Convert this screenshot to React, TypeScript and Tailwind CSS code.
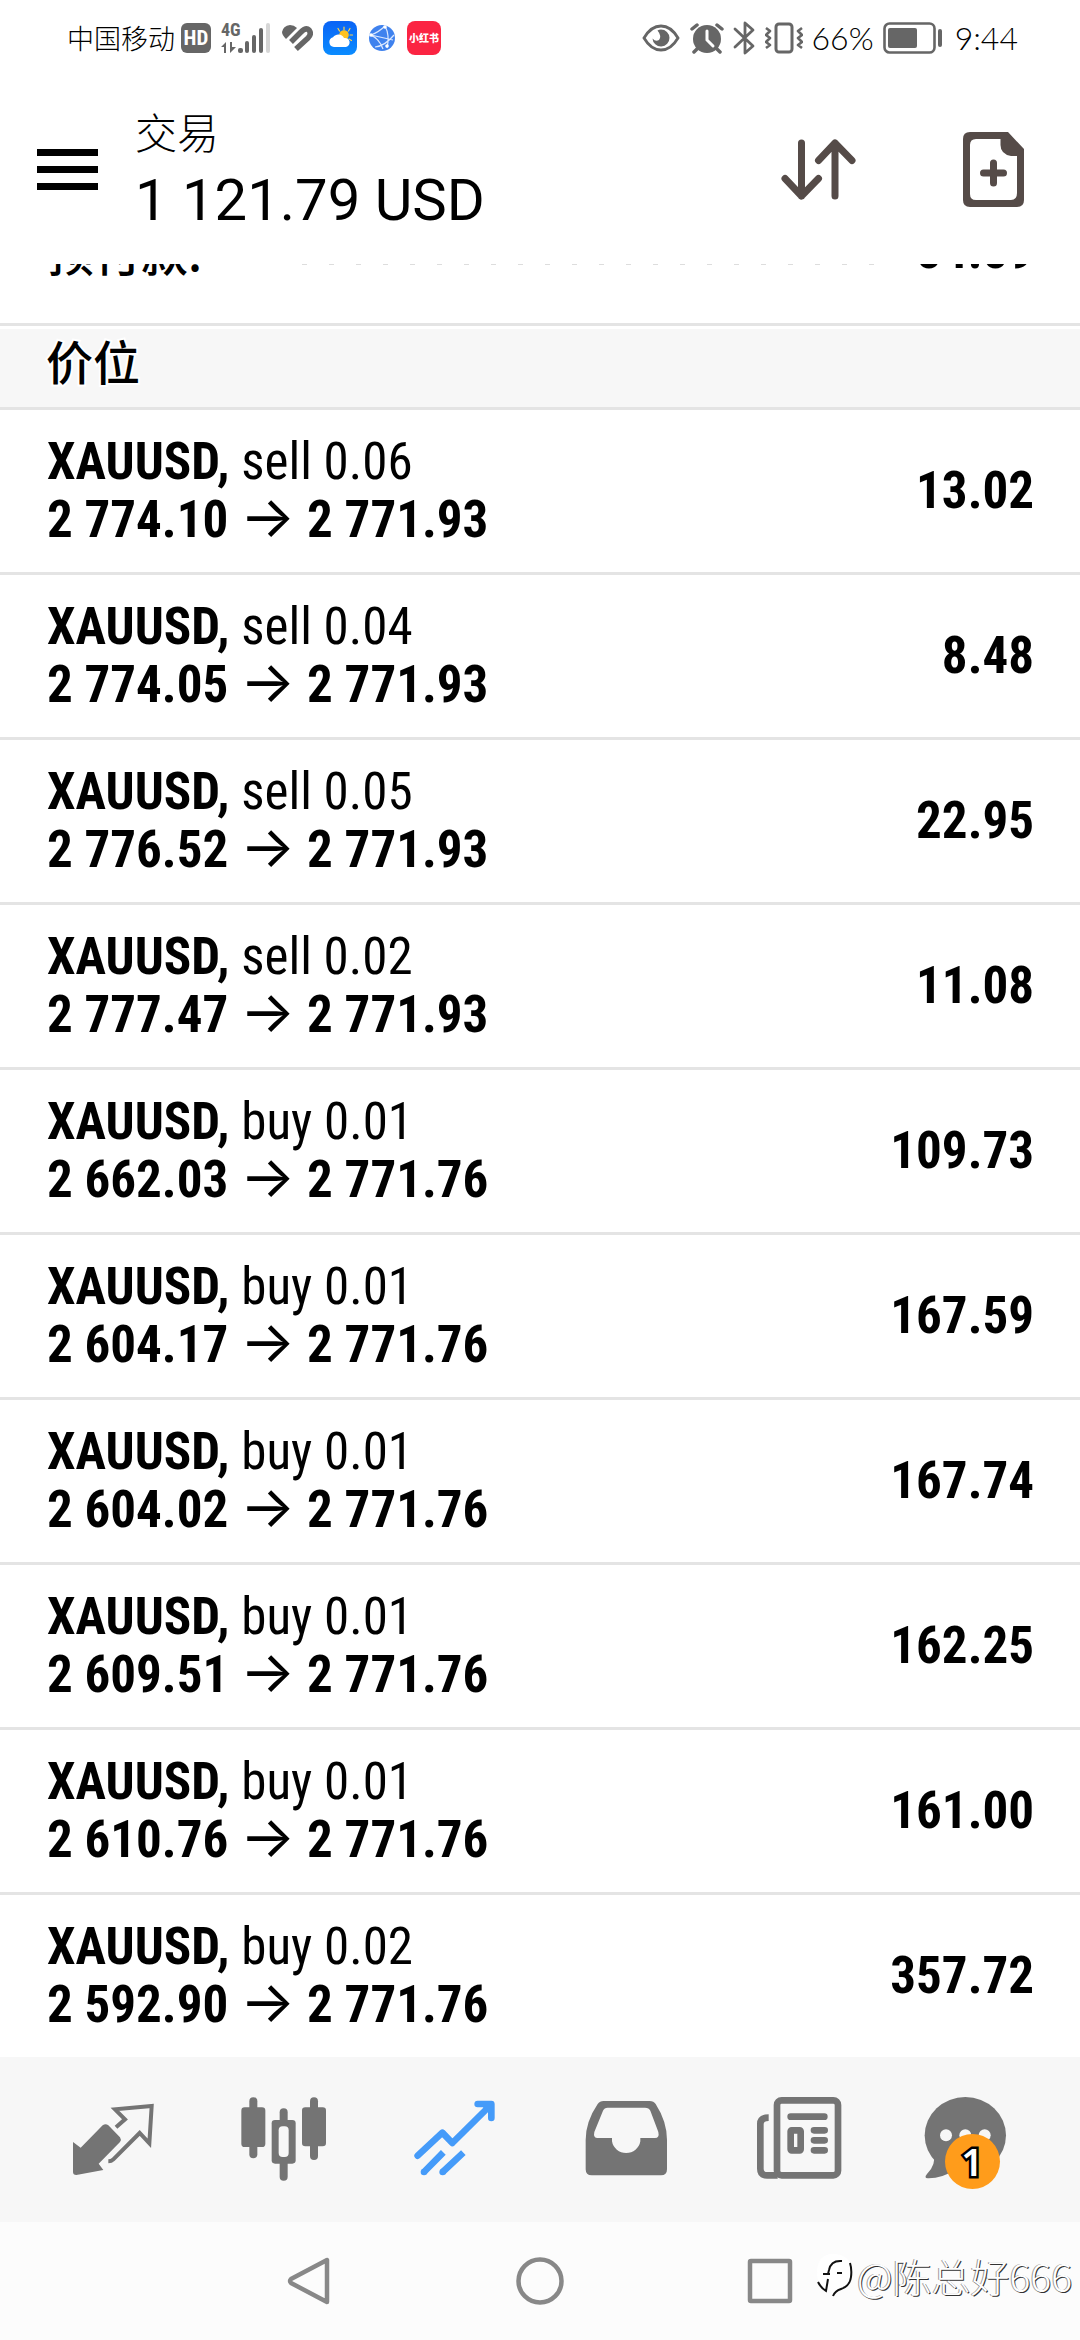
import type { ReactNode } from "react";

type Position = {
  side: "sell" | "buy";
  volume: string;
  open: string;
  current: string;
  profit: string;
};

const positions: Position[] = [
  { side: "sell", volume: "0.06", open: "2 774.10", current: "2 771.93", profit: "13.02" },
  { side: "sell", volume: "0.04", open: "2 774.05", current: "2 771.93", profit: "8.48" },
  { side: "sell", volume: "0.05", open: "2 776.52", current: "2 771.93", profit: "22.95" },
  { side: "sell", volume: "0.02", open: "2 777.47", current: "2 771.93", profit: "11.08" },
  { side: "buy", volume: "0.01", open: "2 662.03", current: "2 771.76", profit: "109.73" },
  { side: "buy", volume: "0.01", open: "2 604.17", current: "2 771.76", profit: "167.59" },
  { side: "buy", volume: "0.01", open: "2 604.02", current: "2 771.76", profit: "167.74" },
  { side: "buy", volume: "0.01", open: "2 609.51", current: "2 771.76", profit: "162.25" },
  { side: "buy", volume: "0.01", open: "2 610.76", current: "2 771.76", profit: "161.00" },
  { side: "buy", volume: "0.02", open: "2 592.90", current: "2 771.76", profit: "357.72" },
];

function SignalIcon() {
  return (
    <svg width="50" height="42" viewBox="0 -5 50 42" fill="#666" aria-hidden="true">
      <text x="0" y="14" fontSize="18" fontWeight="700" fontFamily="'Roboto Condensed', sans-serif">
        4G
      </text>
      <path d="M0 25 5 20v11H3v-6zM9 20v11l6-6h-4v-5z" />
      <rect x="17" y="26" width="5" height="5" rx="2" />
      <rect x="24" y="19" width="4" height="12" rx="2" />
      <rect x="31" y="13" width="4" height="18" rx="2" />
      <rect x="38" y="6" width="4" height="25" rx="2" />
      <rect x="45" y="1" width="4" height="30" rx="2" fill="#d6d6d6" />
    </svg>
  );
}

function HealthIcon() {
  return (
    <svg width="32" height="28" viewBox="0 0 32 28" aria-hidden="true">
      <path d="M10 18 20 8Q25 3 28 6Q31 10 27 14L15 25" fill="none" stroke="#666" strokeWidth="5.500" />
      <path d="M9 1Q13 1 16 4L5 15Q1 11 1 8Q2 2 9 1z" fill="#666" />
    </svg>
  );
}

function WeatherIcon() {
  return (
    <svg width="34" height="34" viewBox="0 0 34 34" aria-hidden="true">
      <defs>
        <linearGradient id="sky" x1="0" y1="0" x2="0" y2="1">
          <stop offset="0" stopColor="#0a63f5" />
          <stop offset="1" stopColor="#0a8cff" />
        </linearGradient>
      </defs>
      <rect width="34" height="34" rx="8" fill="url(#sky)" />
      <path
        d="M21 9V6M25.500 10l1.500-2.500M16.500 10 15 7.500M27 14h2.500M26 18l2.500 1.500"
        stroke="#ffd34a"
        strokeWidth="1.200"
        strokeLinecap="round"
      />
      <circle cx="21" cy="14" r="4.800" fill="#ffc21f" />
      <path d="M11 26a5 5 0 0 1-1-9.800A6.500 6.500 0 0 1 21 17a4.500 4.500 0 0 1 2 9z" fill="#fff" />
    </svg>
  );
}

function GlobeIcon() {
  return (
    <svg width="30" height="30" viewBox="0 0 30 30" aria-hidden="true">
      <circle cx="15" cy="15" r="13" fill="#3f82ee" />
      <path
        d="M3 12Q12 15 16 26M4 12Q12 9 18 3M18 3Q23 12 20 25M4 12 26 17M8 24Q18 23 27 12"
        fill="none"
        stroke="#dbe8ff"
        strokeWidth="1.200"
      />
      <g fill="#fff">
        <circle cx="4" cy="12" r="1.800" />
        <circle cx="18" cy="4" r="1.800" />
        <circle cx="20" cy="23" r="1.800" />
      </g>
    </svg>
  );
}

function EyeIcon() {
  return (
    <svg width="38" height="28" viewBox="0 0 38 28" aria-hidden="true">
      <path d="M2 14Q9 2 19 2T36 14Q29 26 19 26T2 14z" fill="none" stroke="#666" strokeWidth="2.800" />
      <path d="M19 5.500a8.500 8.500 0 1 1-8.500 9q3 3.500 6.500 1.500Q20 12 15.500 6.500Q17 5.500 19 5.500z" fill="#666" />
    </svg>
  );
}

function AlarmIcon() {
  return (
    <svg width="35" height="32" viewBox="0 0 35 32" aria-hidden="true">
      <circle cx="18" cy="17" r="14" fill="#666" />
      <path
        d="M3 7 8 3M33 7l-5-4M8 27l-3 3M28 27l3 3"
        fill="none"
        stroke="#666"
        strokeWidth="3.500"
        strokeLinecap="round"
      />
      <path d="M18 9v9l6 6" fill="none" stroke="#fff" strokeWidth="3" strokeLinecap="round" />
    </svg>
  );
}

function BluetoothIcon() {
  return (
    <svg width="23" height="34" viewBox="0 0 23 34" aria-hidden="true">
      <path
        d="M2 8 20 25 12 32V2l8 7L2 26"
        fill="none"
        stroke="#666"
        strokeWidth="2.800"
        strokeLinejoin="round"
        strokeLinecap="round"
      />
    </svg>
  );
}

function VibrateIcon() {
  return (
    <svg width="38" height="32" viewBox="0 0 38 32" aria-hidden="true">
      <g fill="none" stroke="#666" strokeWidth="3" strokeLinejoin="round">
        <rect x="11" y="2" width="16" height="28" rx="3" />
        <path d="M1 6 5 9 1 13 5 16 1 20 5 23 1 26M37 6l-4 3 4 4-4 3 4 4-4 3 4 3" strokeWidth="2.600" />
      </g>
    </svg>
  );
}

function BatteryIcon() {
  return (
    <svg width="63" height="32" viewBox="0 0 63 32" aria-hidden="true">
      <rect x="1.500" y="1.500" width="50" height="29" rx="5" fill="none" stroke="#666" strokeWidth="2.600" />
      <rect x="5" y="6" width="29" height="20" rx="2" fill="#666" />
      <rect x="55" y="7" width="4" height="18" rx="2" fill="#666" />
    </svg>
  );
}

function StatusBar() {
  return (
    <div className="flex h-[76px] items-center justify-between pr-[62px] pl-[67px]">
      <div className="flex items-center gap-[10px]">
        <span className="-mr-1 font-['Noto_Sans_CJK_SC',sans-serif] text-[27px] leading-8 font-light">中国移动</span>
        <span className="flex h-[30px] w-[30px] items-center justify-center rounded-md bg-[#666] font-['Roboto_Condensed',sans-serif] text-[21px] font-bold text-white">
          HD
        </span>
        <SignalIcon />
        <HealthIcon />
        <WeatherIcon />
        <GlobeIcon />
        <span className="flex h-[34px] w-[34px] items-center justify-center rounded-lg bg-[#fb2442] font-['Noto_Sans_CJK_SC',sans-serif] text-[10px] font-black text-white">
          小红书
        </span>
      </div>
      <div className="flex items-center gap-[9px] font-[Lato,sans-serif] text-[32px] leading-10 font-light">
        <EyeIcon />
        <AlarmIcon />
        <BluetoothIcon />
        <VibrateIcon />
        <span>66%</span>
        <BatteryIcon />
        <span>9:44</span>
      </div>
    </div>
  );
}

function Header() {
  return (
    <header className="flex h-[188px] items-center pr-[56px] pb-[2px] pl-[37px]">
      <button type="button" aria-label="菜单" className="flex w-[61px] flex-col gap-[10px]">
        <span className="h-[7px] w-full bg-black" />
        <span className="h-[7px] w-full bg-black" />
        <span className="h-[7px] w-full bg-black" />
      </button>
      <div className="ml-[37px] flex-1">
        <h1 className="font-['Noto_Sans_CJK_SC',sans-serif] text-[42px] leading-[62px] font-light">交易</h1>
        <p className="font-[Roboto,sans-serif] text-[58px] leading-[76px]">1 121.79 USD</p>
      </div>
      <button type="button" aria-label="排序" className="mr-[107px]">
        <svg width="75" height="61" viewBox="0 0 75 61" aria-hidden="true">
          <path
            d="M20.500 4V57M4 39.500 20.500 57 37.500 39.500M54 57V4M37.500 21.500 54 4 71 21.500"
            fill="none"
            stroke="#554b48"
            strokeWidth="7"
            strokeLinecap="round"
            strokeLinejoin="round"
          />
        </svg>
      </button>
      <button type="button" aria-label="新订单">
        <svg width="61" height="75" viewBox="0 0 61 75" aria-hidden="true">
          <path
            fillRule="evenodd"
            fill="#554b48"
            d="M7 0H45L61 17V68Q61 75 54 75H7Q0 75 0 68V7Q0 0 7 0zM13 7Q7 7 7 13V62Q7 68 13 68H48Q54 68 54 61V24H48Q37.500 22 37.500 13V7z"
          />
          <path d="M30.500 31V51M20.500 41H40.500" stroke="#554b48" strokeWidth="7" strokeLinecap="round" />
        </svg>
      </button>
    </header>
  );
}

function PositionRow({ side, volume, open, current, profit }: Position) {
  return (
    <li className="flex h-[165px] items-center justify-between border-b-[3px] border-[#e4e4e4] pr-[46px] pl-[47px] last:h-[162px] last:border-b-0">
      <div>
        <p>
          <b>XAUUSD,</b> {side} {volume}
        </p>
        <p className="font-bold">
          {open} <span className="font-[Inter,sans-serif] text-[58px] leading-[0px] font-normal">→</span> {current}
        </p>
      </div>
      <p className="font-bold">{profit}</p>
    </li>
  );
}

function TabButton({ label, box, badge, children }: { label: string; box: string; badge?: string; children: ReactNode }) {
  return (
    <button type="button" aria-label={label} className="flex items-center justify-center">
      <span className="relative">
        <svg width="90" height="90" viewBox={box} fill="#747474" aria-hidden="true">
          {children}
        </svg>
        {badge && (
          <span className="absolute top-[40px] left-[22px] flex h-[55px] w-[55px] items-center justify-center rounded-full bg-[#ff9c1b] font-['Noto_Sans',sans-serif] text-[38px] leading-none font-semibold text-white [-webkit-text-stroke:5px_black] [paint-order:stroke_fill]">
            {badge}
          </span>
        )}
      </span>
    </button>
  );
}

function TabBar() {
  return (
    <nav className="grid h-[165px] grid-cols-6 bg-[#f7f7f7] px-[27px] pb-[2px]">
      <TabButton label="行情" box="82 132 270 270">
        <path d="M97 276 120 293 186 226Q195 219 203 226L238 262Q243 269 238 276L174 341 188 360 107 375Q97 375 97 366z" />
        <path
          d="M226 232 253 208 223 178 333 168 326 280 297 249 218 328Q212 334 203 334"
          fill="none"
          stroke="#747474"
          strokeWidth="12"
        />
      </TabButton>
      <TabButton label="图表" box="595 132 270 270">
        <rect x="626" y="142" width="24" height="183" rx="12" />
        <rect x="602" y="172" width="72" height="119" rx="10" />
        <rect x="808" y="142" width="24" height="188" rx="12" />
        <rect x="784" y="172" width="72" height="117" rx="10" />
        <rect x="717" y="175" width="24" height="217" rx="12" />
        <rect x="693" y="210" width="72" height="131" rx="10" />
        <rect x="714" y="229" width="30" height="92" rx="12" fill="#f7f7f7" />
      </TabButton>
      <TabButton label="交易" box="1108 132 270 270">
        <g fill="none" stroke="#459bf9" strokeWidth="20" strokeLinecap="round" strokeLinejoin="round">
          <path d="M1131 317 1205 248 1235 279 1350 165M1311 162H1352V204" />
          <path d="M1150 366 1208 307M1206 366 1268 308" strokeLinecap="butt" />
        </g>
        <g fill="#459bf9">
          <circle cx="1150" cy="366" r="10" />
          <circle cx="1206" cy="366" r="10" />
          <path d="M1320 165H1352V195z" />
        </g>
      </TabButton>
      <TabButton label="历史" box="122 132 270 270">
        <path
          fillRule="evenodd"
          d="M190 153H328Q340 153 346 162Q380 215 380 270V358Q380 376 362 376H154Q136 376 136 358V270Q136 215 172 162Q178 153 190 153zM202 173Q192 173 188 182L162 246Q158 264 172 264H215V274A43 41 0 0 0 300 274V264H344Q358 264 354 246L330 182Q326 173 314 173z"
        />
      </TabButton>
      <TabButton label="新闻" box="635 132 270 270">
        <g fill="none" stroke="#747474" strokeWidth="20">
          <rect x="710" y="151" width="183" height="225" rx="14" />
          <path d="M685 203Q660 203 660 222V356Q660 376 680 376H712" />
          <path d="M751 200H852M821 241H853M821 271H853M821 301H853" strokeLinecap="round" />
          <rect x="751" y="241" width="30" height="60" rx="3" />
        </g>
      </TabButton>
      <TabButton label="消息" box="1148 132 270 270" badge="1">
        <ellipse cx="1275" cy="256" rx="122" ry="115" />
        <path d="M1180 310Q1188 345 1160 372Q1150 384 1162 385Q1205 386 1240 360z" />
        <g fill="#f7f7f7">
          <circle cx="1217" cy="256" r="18" />
          <circle cx="1275" cy="256" r="18" />
          <circle cx="1333" cy="256" r="18" />
        </g>
      </TabButton>
    </nav>
  );
}

function SystemNav() {
  return (
    <div className="relative flex h-[118px] items-center justify-center gap-[182px] bg-[#fcfcfc]">
      <button type="button" aria-label="返回">
        <svg width="48" height="48" viewBox="0 0 48 48" fill="none" stroke="#888" strokeWidth="4.500" strokeLinejoin="round">
          <path d="M41 3V45L5 26Q3 24 5 22z" />
        </svg>
      </button>
      <button type="button" aria-label="主屏幕">
        <svg width="48" height="48" viewBox="0 0 48 48" fill="none" stroke="#888" strokeWidth="4.500">
          <circle cx="24" cy="24" r="21.500" />
        </svg>
      </button>
      <button type="button" aria-label="最近任务">
        <svg width="48" height="48" viewBox="0 0 48 48" fill="none" stroke="#888" strokeWidth="4.500" strokeLinejoin="round">
          <rect x="4" y="4" width="40" height="40" rx="1" />
        </svg>
      </button>
      <div className="absolute right-2 bottom-[40px] flex items-center gap-1">
        <svg width="38" height="44" viewBox="0 0 38 44" aria-hidden="true">
          <path d="M18 1Q36 1 36 18V22Q36 34 24 38L18 43 16 37Q2 36 2 20Q2 1 18 1z" fill="#fff" />
          <path
            d="M27 8Q16 7 14 17L13 21M8 21H15M13 26 11 38Q6 35 3 29"
            fill="none"
            stroke="#111"
            strokeWidth="2"
          />
          <path d="M35 10Q37 16 36 24Q35 33 26 36Q20 38 18 43M22 20H27" fill="none" stroke="#111" strokeWidth="2" />
        </svg>
        <span className="font-['Noto_Sans_CJK_SC',sans-serif] text-[39px] leading-[50px] font-light text-white [text-shadow:1px_1px_0_#333,-1px_0_0_#999]">
          @陈总好666
        </span>
      </div>
    </div>
  );
}

export default function App() {
  return (
    <div className="flex min-h-screen flex-col bg-white font-['Roboto_Condensed','Noto_Sans_CJK_SC',sans-serif] text-[51px] leading-[58px] text-black">
      <StatusBar />
      <Header />
      <main className="flex-1">
        <section className="flex h-[62px] flex-col justify-end overflow-hidden border-b-[3px] border-[#e4e4e4] pr-[46px] pb-[43px] pl-[47px]">
          <div className="flex items-end font-bold">
            <span className="font-['Noto_Sans_CJK_SC',sans-serif] text-[47px] font-medium">预付款:</span>
            <span className="mr-10 mb-[15px] ml-[100px] h-px flex-1 bg-[repeating-linear-gradient(90deg,#ddd_0_5px,transparent_5px_27px)]" />
            <span>84.89</span>
          </div>
        </section>
        <h2 className="mt-[3px] flex h-[81px] items-center border-b-[3px] border-[#e4e4e4] bg-[#f7f7f7] px-[46px] pb-4 font-['Noto_Sans_CJK_SC',sans-serif] text-[47px] font-medium [-webkit-text-stroke:4px_white] [paint-order:stroke_fill]">
          价位
        </h2>
        <ul>
          {positions.map((position) => (
            <PositionRow key={position.open} {...position} />
          ))}
        </ul>
      </main>
      <TabBar />
      <SystemNav />
    </div>
  );
}
